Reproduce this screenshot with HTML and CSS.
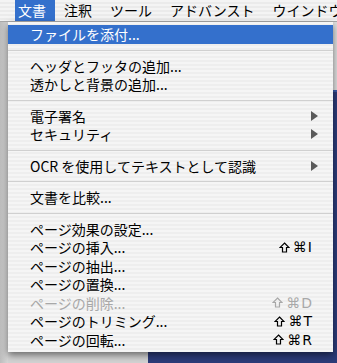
FILE: index.html
```html
<!DOCTYPE html>
<html lang="ja">
<head>
  <meta charset="UTF-8">
  <title>文書メニュー</title>
  <link rel="stylesheet" href="styles.css">
</head>
<body>

  <div class="menubar">
    <span class="menubar-item first active">文書</span>
    <span class="menubar-item">注釈</span>
    <span class="menubar-item">ツール</span>
    <span class="menubar-item">アドバンスト</span>
    <span class="menubar-item">ウインドウ</span>
  </div>

  <!-- window behind the open menu -->
  <div class="desk">
    <div class="side"></div>
    <div class="doc">
      <div class="toolbar"></div>
      <div class="page">
        <div class="page-left"></div>
        <div class="page-right"></div>
      </div>
    </div>
  </div>

  <div class="menu">
    <div class="item selected">ファイルを添付...</div>
    <div class="sep"></div>
    <div class="item">ヘッダとフッタの追加...</div>
    <div class="item">透かしと背景の追加...</div>
    <div class="sep"></div>
    <div class="item">電子署名<span class="arrow"></span></div>
    <div class="item">セキュリティ<span class="arrow"></span></div>
    <div class="sep"></div>
    <div class="item">OCR を使用してテキストとして認識<span class="arrow"></span></div>
    <div class="sep"></div>
    <div class="item">文書を比較...</div>
    <div class="sep"></div>
    <div class="item">ページ効果の設定...</div>
    <div class="item">ページの挿入...<span class="key"><svg class="shift" viewBox="0 0 11 11"><path d="M5.5 1 L10 5.5 H7.5 V10 H3.5 V5.5 H1 Z"/></svg>⌘I</span></div>
    <div class="item">ページの抽出...</div>
    <div class="item">ページの置換...</div>
    <div class="item disabled">ページの削除...<span class="key"><svg class="shift" viewBox="0 0 11 11"><path d="M5.5 1 L10 5.5 H7.5 V10 H3.5 V5.5 H1 Z"/></svg>⌘D</span></div>
    <div class="item">ページのトリミング...<span class="key"><svg class="shift" viewBox="0 0 11 11"><path d="M5.5 1 L10 5.5 H7.5 V10 H3.5 V5.5 H1 Z"/></svg>⌘T</span></div>
    <div class="item">ページの回転...<span class="key"><svg class="shift" viewBox="0 0 11 11"><path d="M5.5 1 L10 5.5 H7.5 V10 H3.5 V5.5 H1 Z"/></svg>⌘R</span></div>
  </div>

</body>
</html>
```

FILE: styles.css
```css
body {
  margin: 0;
  padding: 0;
  width: 337px;
  height: 363px;
  overflow: hidden;
  position: relative;
  font-family: "Noto Sans CJK JP", "DejaVu Sans", sans-serif;
  font-size: 14px;
  color: #000;
  background-color: #cfcfcf;
}
.menubar {
  display: flex;
  height: 21px;
  padding-left: 15px;
  border-bottom: 1px solid #a9a9a9;
  background: repeating-linear-gradient(to bottom, #f4f4f4 0, #f4f4f4 2px, #ebebeb 2px, #ebebeb 4px);
}
.menubar-item {
  padding: 0 9px;
  line-height: 21px;
  white-space: nowrap;
}
.menubar-item.first {
  padding-left: 3px;
}
.menubar-item.active {
  background-color: #3470cc;
  color: white;
}
.desk {
  display: flex;
  height: 341px;
}
.side {
  width: 8px;
  background: linear-gradient(to right, #bdbdbd, #d6d6d6);
}
.doc {
  flex: 1;
  display: flex;
  flex-direction: column;
}
.toolbar {
  height: 68px;
  background-color: #dedede;
  border-bottom: 2px solid #3a5aa8;
}
.page {
  flex: 1;
  display: flex;
}
.page-left {
  width: 140px;
  background-color: #d2d2d2;
}
.page-right {
  flex: 1;
  background-color: #2c3b78;
}
.menu {
  position: absolute;
  top: 22px;
  left: 8px;
  width: 325px;
  padding: 3px 0;
  box-sizing: border-box;
  height: 330px;
  background: repeating-linear-gradient(to bottom, #f5f5f5 0, #f5f5f5 2px, #eeeeee 2px, #eeeeee 4px);
  box-shadow: 0 3px 7px rgba(0, 0, 0, 0.5);
}
.item {
  display: flex;
  align-items: center;
  height: 18.5px;
  padding: 0 20px 0 22px;
  white-space: nowrap;
}
.item.selected {
  background-color: #3470cc;
  color: white;
}
.item.disabled {
  color: #a8a8a8;
}
.sep {
  height: 13px;
  display: flex;
  align-items: center;
}
.sep::before {
  content: "";
  flex: 1;
  height: 1px;
  background-color: #d0d0d0;
}
.arrow {
  margin-left: auto;
  margin-right: -5px;
  width: 0;
  height: 0;
  border-top: 5px solid transparent;
  border-bottom: 5px solid transparent;
  border-left: 7px solid #5a5a5a;
}
.key {
  margin-left: auto;
  display: flex;
  align-items: center;
  font-family: "DejaVu Sans", sans-serif;
  font-size: 14px;
  letter-spacing: 1px;
}
.shift {
  width: 11px;
  height: 11px;
  margin-right: 3px;
  fill: none;
  stroke: currentColor;
  stroke-width: 1.2;
  stroke-linejoin: miter;
}
```
